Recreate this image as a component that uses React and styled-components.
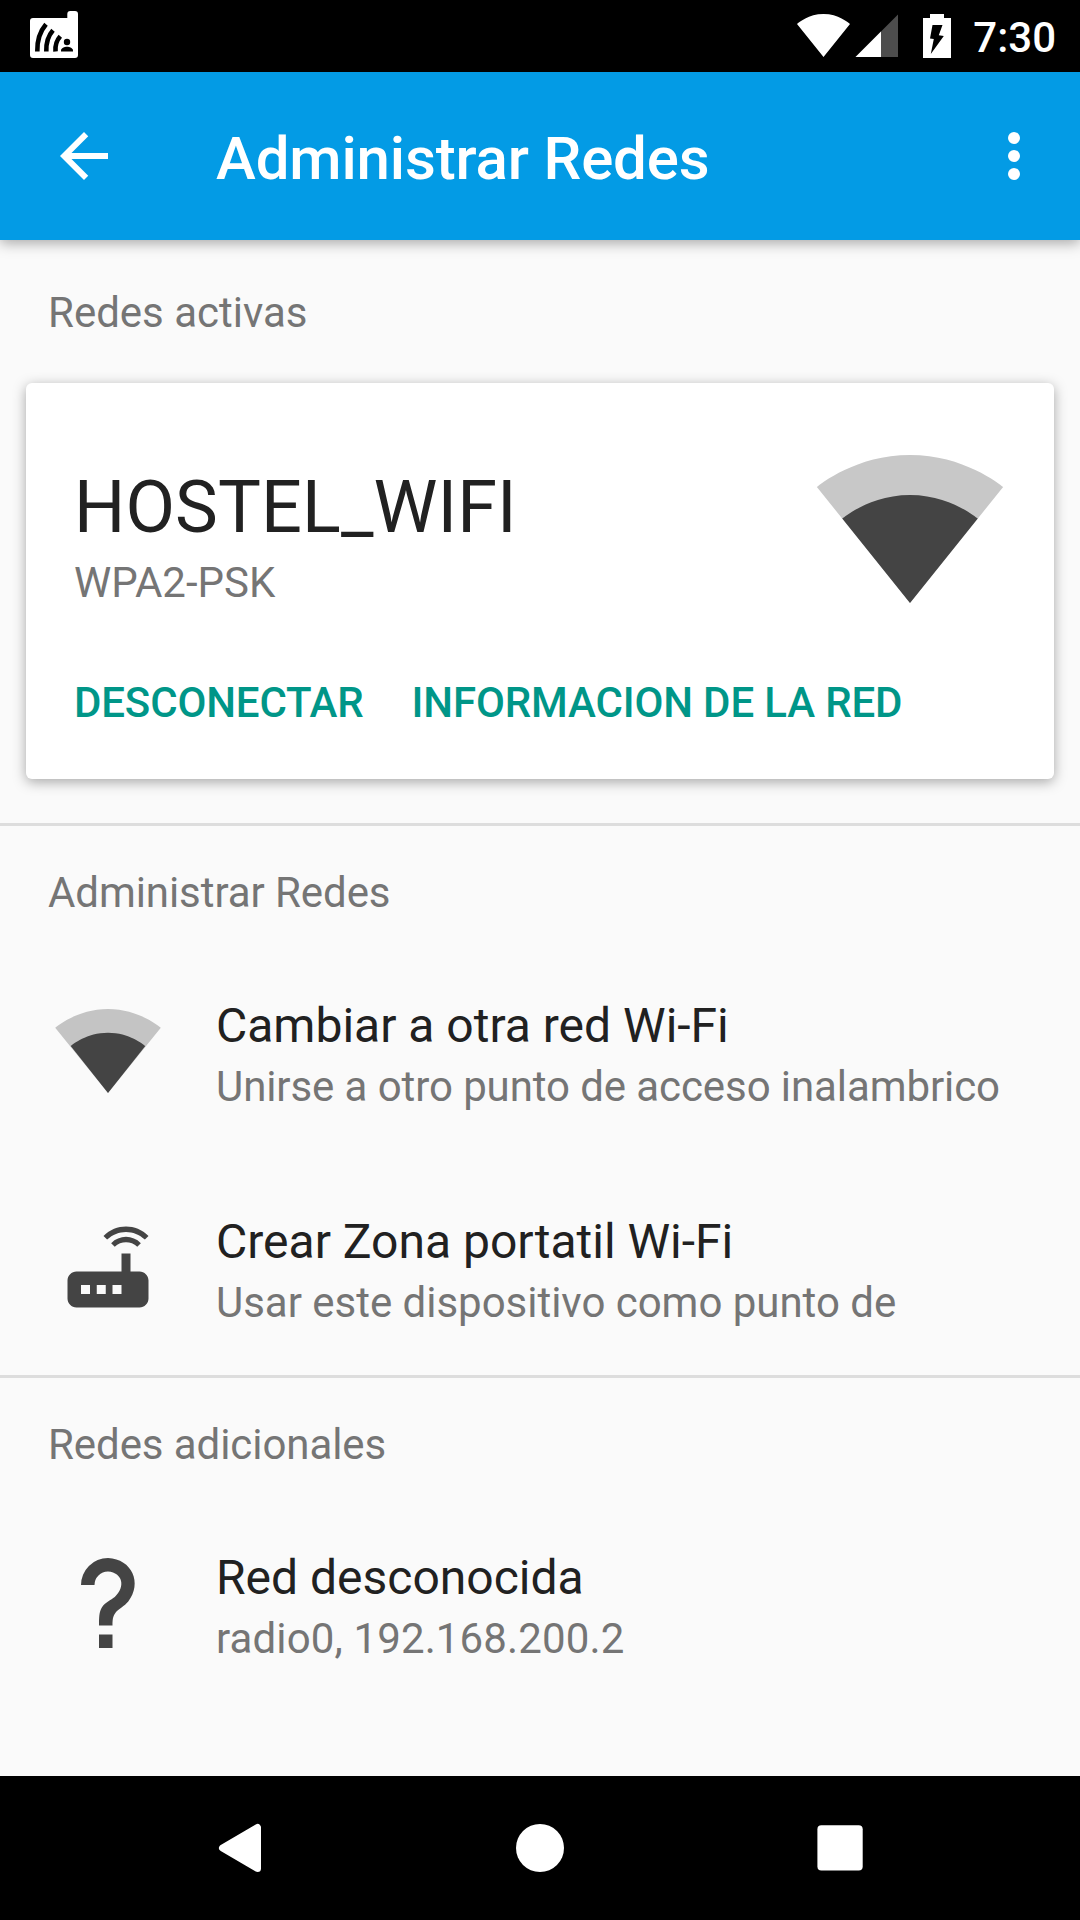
import React from 'react';
import styled, { createGlobalStyle } from 'styled-components';

const GlobalStyle = createGlobalStyle`
    * {
        box-sizing: border-box;
    }

    body {
        margin: 0;
        background-color: #fafafa;
        font-family: Roboto, "Noto Sans", sans-serif;
    }

    svg {
        display: block;
        flex-shrink: 0;
    }
`;

const Screen = styled.div`
    display: flex;
    flex-direction: column;
    width: 1080px;
    height: 1920px;
    overflow: hidden;
    background-color: #fafafa;
`;

const StatusBar = styled.header`
    display: flex;
    justify-content: space-between;
    height: 72px;
    padding: 0 24px 0 27px;
    background-color: #000000;
`;

const StatusIcons = styled.div`
    display: flex;
`;

const Clock = styled.span`
    margin-left: 15px;
    padding-top: 13px;
    line-height: 49px;
    font-size: 42px;
    font-weight: 500;
    color: #ffffff;
`;

const AppBar = styled.div`
    position: relative;
    display: flex;
    align-items: center;
    height: 168px;
    padding: 0 30px 0 48px;
    background-color: #039be5;
    box-shadow: 0 3px 13px rgb(0 0 0 / 34%);
`;

const IconButton = styled.button`
    padding: 0;
    border: none;
    background: none;
    color: #ffffff;
`;

const Title = styled.h1`
    flex: 1;
    margin: 0 0 0 96px;
    padding-top: 5px;
    line-height: 71px;
    font-size: 60px;
    font-weight: 500;
    letter-spacing: -0.15px;
    color: #ffffff;
`;

const Content = styled.main`
    flex: 1;
`;

const Section = styled.section`
    border-bottom: ${props => props.$last ? "none" : "3px solid #dddddd"};
`;

const SectionLabel = styled.h2`
    height: ${props => props.$height || "117px"};
    margin: 0;
    padding: ${props => props.$top || "42px"} 48px 0;
    line-height: 49px;
    font-size: 42px;
    font-weight: 400;
    letter-spacing: ${props => props.$tracking || "-0.07px"};
    color: #757575;
`;

const Card = styled.div`
    display: flex;
    flex-direction: column;
    justify-content: space-between;
    height: 396px;
    margin: 0 26px 44px;
    padding: 48px 48px 52px;
    border-radius: 6px;
    background-color: #ffffff;
    box-shadow: 0 3px 13px rgb(0 0 0 / 34%);
`;

const CardTop = styled.div`
    display: flex;
    justify-content: space-between;
`;

const CardText = styled.div`
    padding-top: 34px;
`;

const NetworkName = styled.div`
    line-height: 85px;
    font-size: 72px;
    letter-spacing: 0.1px;
    color: #212121;
`;

const Security = styled.div`
    margin-top: 8px;
    line-height: 49px;
    font-size: 42px;
    color: #757575;
`;

const CardActions = styled.div`
    display: flex;
    gap: 48px;
`;

const FlatButton = styled.button`
    padding: 0;
    border: none;
    background: none;
    line-height: 49px;
    font-family: inherit;
    font-size: 42px;
    font-weight: 500;
    letter-spacing: -0.15px;
    color: #009688;
`;

const ListItem = styled.div`
    display: flex;
    align-items: center;
    gap: 54px;
    height: 216px;
    padding: 0 54px;
`;

const ItemText = styled.div`
    display: flex;
    flex-direction: column;
    gap: 8px;
    padding-top: 6px;
    height: 120px;
    white-space: nowrap;
`;

const ItemTitle = styled.div`
    line-height: 57px;
    font-size: 48px;
    color: #212121;
`;

const ItemSubtitle = styled.div`
    line-height: 49px;
    font-size: 42px;
    letter-spacing: ${props => props.$tracking || "normal"};
    color: #757575;
`;

const NavBar = styled.nav`
    display: flex;
    align-items: center;
    justify-content: center;
    gap: 228px;
    height: 144px;
    background-color: #000000;
`;

const DebugIcon = () => (
  <svg width="54" height="72" viewBox="27 0 54 72">
    <path fill="#fff" d="M33 18h34.300v-4a3 3 0 0 1 3-3H75a3 3 0 0 1 3 3v41a3 3 0 0 1-3 3H33a3 3 0 0 1-3-3V21a3 3 0 0 1 3-3z" />
    <g fill="none" stroke="#000" strokeWidth="4.6">
      <path d="M37.300 51.500C37 41 39.500 32 46 24.300" />
      <path d="M46.300 51.500C46 43 48 36 53 30.300" />
      <path d="M55.500 51.500C55 45 56.500 40.500 60.300 36.300" />
    </g>
    <circle cx="67" cy="42" r="3.200" />
    <path d="M61 51.500v-1.200c0-2 3.500-3.600 6-3.600s6 1.600 6 3.600v1.200z" />
  </svg>
);

const StatusWifi = () => (
  <svg width="58" height="72" viewBox="795 0 58 72">
    <path fill="#fff" d="M823.500 57L797 24c2-1.600 11.500-10 26.500-10S848 22.400 850 24z" />
  </svg>
);

const StatusSignal = () => (
  <svg width="45" height="72" viewBox="853 0 45 72">
    <path fill="#4d4d4d" d="M898 14.500V57h-42.500z" />
    <path fill="#fff" d="M881 31.500V57h-25.500z" />
  </svg>
);

const StatusBattery = () => (
  <svg width="60" height="72" viewBox="898 0 60 72">
    <path fill="#fff" d="M930 14h14v4h7v40h-28V18h7z" />
    <path d="M932.500 25h10l-3.700 10.300 5 .7-13 18 3-15-3.800-.5z" />
  </svg>
);

const BackArrow = () => (
  <svg width="72" height="72" viewBox="0 0 24 24" fill="currentColor">
    <path d="M20 11H7.830l5.590-5.590L12 4l-8 8 8 8 1.410-1.410L7.830 13H20v-2z" />
  </svg>
);

const MoreIcon = () => (
  <svg width="72" height="72" viewBox="0 0 24 24" fill="currentColor">
    <circle cx="12" cy="6" r="2" />
    <circle cx="12" cy="12" r="2" />
    <circle cx="12" cy="18" r="2" />
  </svg>
);

const WifiLarge = () => (
  <svg width="192" height="192" viewBox="0 0 24 24" fill="#444">
    <path fill="#c8c8c8" d="M23.640 7c-.450-.340-4.930-4-11.640-4C5.280 3 .810 6.660.360 7L12 21.500 23.640 7z" />
    <path d="M3.530 10.950L12 21.500l8.470-10.550C20.040 10.620 16.810 8 12 8c-4.810 0-8.040 2.620-8.470 2.950z" />
  </svg>
);

const WifiSmall = () => (
  <svg width="108" height="108" viewBox="0 0 108 108" fill="#444">
    <path fill="#c4c4c4" d="M54 96L1.200 30.700C3.200 29.200 23.600 12 54 12s50.800 17.200 52.800 18.700z" />
    <path d="M54 96L16.700 49C18.600 47.500 32.800 35.700 54 35.700S89.400 47.500 91.300 49z" />
  </svg>
);

const RouterIcon = () => (
  <svg width="108" height="108" viewBox="0 0 24 24" fill="#444">
    <path d="M20.2 5.900l.8-.8C19.600 3.700 17.800 3 16 3s-3.600.7-5 2.100l.8.8C13 4.800 14.500 4.200 16 4.200s3 .6 4.200 1.700zm-.9.8c-.9-.9-2.100-1.400-3.300-1.400s-2.400.5-3.300 1.400l.8.8c.7-.7 1.600-1 2.500-1 .9 0 1.800.3 2.500 1l.8-.8zM19 13h-2V9h-2v4H5c-1.100 0-2 .9-2 2v4c0 1.100.9 2 2 2h14c1.100 0 2-.9 2-2v-4c0-1.100-.9-2-2-2zM8 18H6v-2h2v2zm3.500 0h-2v-2h2v2zm3.500 0h-2v-2h2v2z" />
  </svg>
);

const UnknownIcon = () => (
  <svg width="108" height="108" viewBox="0 0 24 24" fill="#444">
    <path d="M10 19h3v3h-3v-3M12 2c5.350.220 7.680 5.620 4.500 9.670-.83 1-2.170 1.660-2.830 2.500C13 15 13 16 13 17h-3c0-1.670 0-3.080.67-4.080.66-1 2-1.590 2.830-2.250C15.920 8.430 15.320 5.260 12 5a3 3 0 0 0-3 3H6a6 6 0 0 1 6-6z" />
  </svg>
);

const NavBack = () => (
  <svg width="72" height="72" viewBox="0 0 72 72">
    <path fill="#fff" stroke="#fff" strokeWidth="7" strokeLinejoin="round" d="M18.500 36L53.500 15.500v41z" />
  </svg>
);

const NavHome = () => (
  <svg width="72" height="72" viewBox="0 0 72 72">
    <circle cx="36" cy="36" r="24" fill="#fff" />
  </svg>
);

const NavRecent = () => (
  <svg width="72" height="72" viewBox="0 0 72 72">
    <rect x="13.400" y="13.200" width="45.300" height="45.300" rx="4" fill="#fff" />
  </svg>
);

const NetworkItem = ({ icon, title, subtitle, tracking }) => (
  <ListItem>
    {icon}
    <ItemText>
      <ItemTitle>{title}</ItemTitle>
      <ItemSubtitle $tracking={tracking}>{subtitle}</ItemSubtitle>
    </ItemText>
  </ListItem>
);

const App = () => (
  <>
    <GlobalStyle />
    <Screen>
      <StatusBar>
        <DebugIcon />
        <StatusIcons>
          <StatusWifi />
          <StatusSignal />
          <StatusBattery />
          <Clock>7:30</Clock>
        </StatusIcons>
      </StatusBar>
      <AppBar>
        <IconButton aria-label="Atras"><BackArrow /></IconButton>
        <Title>Administrar Redes</Title>
        <IconButton aria-label="Mas opciones"><MoreIcon /></IconButton>
      </AppBar>
      <Content>
        <Section>
          <SectionLabel $height="143px" $top="48px" $tracking="normal">Redes activas</SectionLabel>
          <Card>
            <CardTop>
              <CardText>
                <NetworkName>HOSTEL_WIFI</NetworkName>
                <Security>WPA2-PSK</Security>
              </CardText>
              <WifiLarge />
            </CardTop>
            <CardActions>
              <FlatButton>DESCONECTAR</FlatButton>
              <FlatButton>INFORMACION DE LA RED</FlatButton>
            </CardActions>
          </Card>
        </Section>
        <Section>
          <SectionLabel>Administrar Redes</SectionLabel>
          <NetworkItem
            icon={<WifiSmall />}
            title="Cambiar a otra red Wi-Fi"
            subtitle="Unirse a otro punto de acceso inalambrico"
            tracking="-0.09px"
          />
          <NetworkItem
            icon={<RouterIcon />}
            title="Crear Zona portatil Wi-Fi"
            subtitle="Usar este dispositivo como punto de"
            tracking="-0.02px"
          />
        </Section>
        <Section $last>
          <SectionLabel>Redes adicionales</SectionLabel>
          <NetworkItem
            icon={<UnknownIcon />}
            title="Red desconocida"
            subtitle="radio0, 192.168.200.2"
            tracking="0.13px"
          />
        </Section>
      </Content>
      <NavBar>
        <NavBack />
        <NavHome />
        <NavRecent />
      </NavBar>
    </Screen>
  </>
);

export default App;
